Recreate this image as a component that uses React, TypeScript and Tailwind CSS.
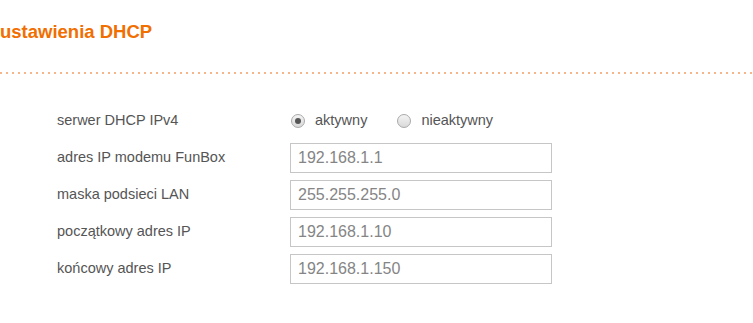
import React from 'react';

const rows = [
  { label: 'adres IP modemu FunBox', value: '192.168.1.1' },
  { label: 'maska podsieci LAN', value: '255.255.255.0' },
  { label: 'początkowy adres IP', value: '192.168.1.10' },
  { label: 'końcowy adres IP', value: '192.168.1.150' },
];

function Radio({ checked, label }: { checked?: boolean; label: string }) {
  return (
    <label className="flex items-center gap-[10px]">
      <span className="w-[14px] h-[14px] rounded-full border border-[#a9a9a9] bg-[linear-gradient(to_bottom,#f4f4f4,#d9d9d9)] flex items-center justify-center">
        {checked && <span className="w-[6px] h-[6px] rounded-full bg-[#555555]"></span>}
      </span>
      <span>{label}</span>
    </label>
  );
}

export default function App() {
  return (
    <div className="w-[753px] h-[323px] bg-white overflow-hidden font-['Liberation_Sans',Arial,sans-serif]">
      {/* Header */}
      <h1 className="pt-[23px] text-[18.5px] leading-[18px] font-bold text-[#f16e00]">ustawienia DHCP</h1>
      <div className="mt-[31px] h-[2px] w-full bg-[linear-gradient(to_right,#f7b58a_2px,transparent_2px)] bg-[length:6px_2px]"></div>

      {/* Form */}
      <div className="mt-[32px] pl-[57px] flex flex-col gap-[7px] text-[14.5px] text-[#555555]">
        <div className="flex items-center h-[30px]">
          <span className="w-[233px]">serwer DHCP IPv4</span>
          <div className="flex items-center gap-[30px] pl-[1px] text-[#555555]">
            <Radio checked label="aktywny" />
            <Radio label="nieaktywny" />
          </div>
        </div>
        {rows.map((r) => (
          <div key={r.label} className="flex items-center h-[30px]">
            <span className="w-[233px]">{r.label}</span>
            <div className="w-[262px] h-[30px] border border-[#c6c6c6] flex items-center pl-[7px] text-[16px] text-[#858585]">
              {r.value}
            </div>
          </div>
        ))}
      </div>
    </div>
  );
}
